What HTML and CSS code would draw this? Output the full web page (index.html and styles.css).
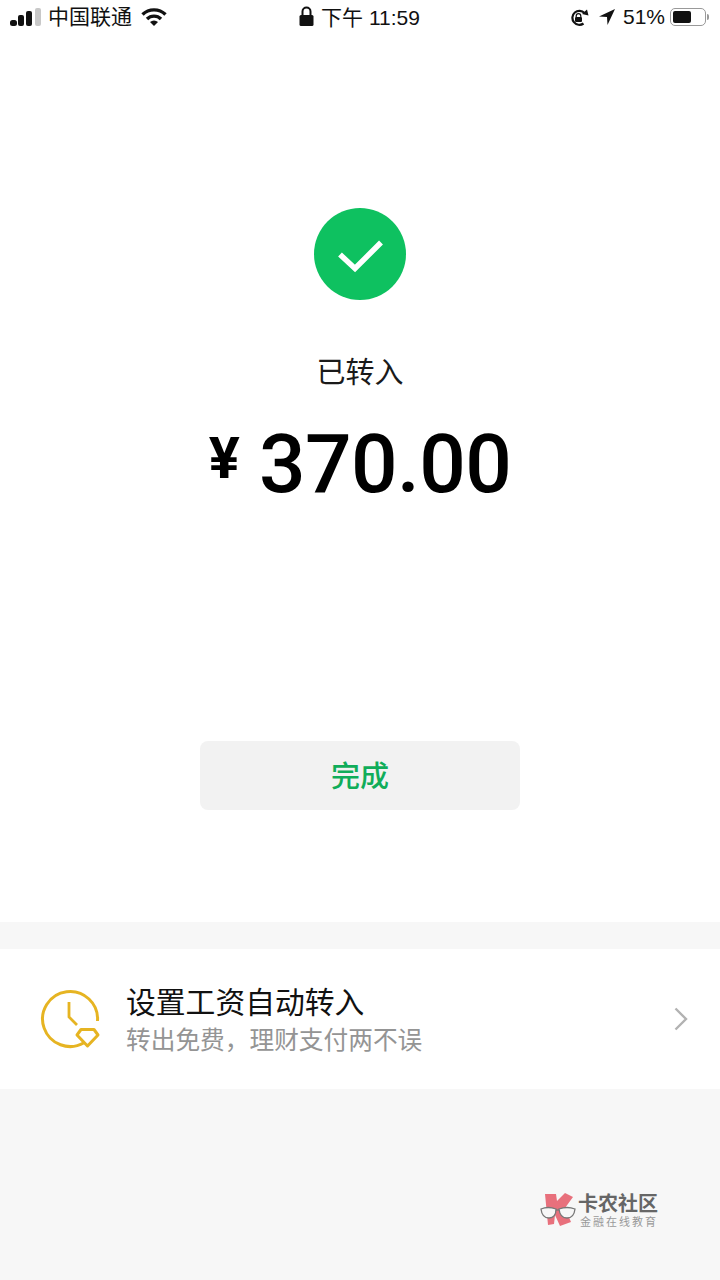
FILE: index.html
```html
<!DOCTYPE html>
<html lang="zh-CN">
<head>
  <meta charset="UTF-8">
  <title>已转入</title>
  <meta name="viewport" content="width=device-width, initial-scale=1.0">
  <link rel="stylesheet" href="styles.css">
</head>
<body>
  <div class="page">
    <div class="status-bar">
      <div class="status-left">
        <svg class="signal" width="31" height="18" viewBox="0 0 31 18">
          <rect x="0" y="12" width="7" height="6" rx="2.5" fill="#111"/>
          <rect x="8" y="7" width="6" height="11" rx="2" fill="#111"/>
          <rect x="16" y="3" width="6" height="15" rx="2" fill="#111"/>
          <rect x="25" y="0" width="6" height="18" rx="2" fill="#c8c8c8"/>
        </svg>
        <span class="carrier">中国联通</span>
        <svg class="wifi" width="26" height="18" viewBox="0 0 26 18">
          <path d="M1.5 6.5 A16.5 16.5 0 0 1 24.5 6.5" fill="none" stroke="#111" stroke-width="3.4"/>
          <path d="M6 11 A10 10 0 0 1 20 11" fill="none" stroke="#111" stroke-width="3.4"/>
          <path d="M13 18 L9 14 A6 6 0 0 1 17 14 Z" fill="#111"/>
        </svg>
      </div>
      <div class="status-center">
        <svg width="15" height="20" viewBox="0 0 15 20">
          <path d="M3.5 9 V5.5 A4 4 0 0 1 11.5 5.5 V9" fill="none" stroke="#111" stroke-width="2"/>
          <rect x="0.5" y="9" width="14" height="11" rx="1.5" fill="#111"/>
        </svg>
        <span class="clock">下午 11:59</span>
      </div>
      <div class="status-right">
        <svg width="19" height="17" viewBox="0 0 19 17">
          <path d="M13.5 14.5 A7 7 0 1 1 14.5 4" fill="none" stroke="#111" stroke-width="2.2"/>
          <path d="M12 5 L18.5 6.5 L17 0.5 Z" fill="#111"/>
          <path d="M6.2 8 V7 A2.3 2.3 0 0 1 10.8 7 V8" fill="none" stroke="#111" stroke-width="1.2"/>
          <rect x="5" y="8" width="7" height="5" rx="1" fill="#111"/>
        </svg>
        <svg class="arrow" width="16" height="16" viewBox="0 0 16 16">
          <path d="M16 0 L0 7.5 L8 8 L8.5 16 Z" fill="#111"/>
        </svg>
        <span class="percent">51%</span>
        <div class="battery"><div class="battery-fill"></div></div>
        <div class="battery-tip"></div>
      </div>
    </div>

    <div class="result">
      <svg class="check" width="92" height="92" viewBox="0 0 92 92">
        <circle cx="46" cy="46" r="46" fill="#0ec160"/>
        <path d="M26 46.5 L41 60.5 L67 34.5" fill="none" stroke="#fff" stroke-width="5.5"/>
      </svg>
      <div class="result-label">已转入</div>
      <div class="amount"><span class="yen">¥</span><span class="digits">370.00</span></div>
      <button class="done-btn"><span class="done-label">完成</span></button>
    </div>

    <div class="band"></div>

    <div class="promo">
      <svg class="promo-icon" width="62" height="62" viewBox="0 0 62 62">
        <path d="M44 54.7 A27.5 27.5 0 1 1 57.5 33" fill="none" stroke="#e6b422" stroke-width="3"/>
        <path d="M29 14 V29 L37 37" fill="none" stroke="#e6b422" stroke-width="2.8"/>
        <path d="M41 41.5 H54 L58 47 L47.5 58 L37 47 Z" fill="none" stroke="#e6b422" stroke-width="3" stroke-linejoin="round"/>
      </svg>
      <div class="promo-text">
        <div class="promo-title">设置工资自动转入</div>
        <div class="promo-sub">转出免费，理财支付两不误</div>
      </div>
      <svg class="chevron" width="14" height="24" viewBox="0 0 14 24">
        <path d="M1.5 1.5 L12 12 L1.5 22.5" fill="none" stroke="#b2b2b2" stroke-width="2.4"/>
      </svg>
    </div>

    <div class="rest"></div>

    <!-- 水印 -->
    <div class="watermark">
      <svg width="38" height="38" viewBox="0 0 38 38">
        <path d="M5 3 L16 3 L17 10 L25 2 L33 6 L25 17 L31 31 L20 35 L15 24 L14 33 L8 34 Z" fill="#e8707c"/>
        <path d="M1 18 Q8 15 16 18 Q16 27 9 27 Q2 27 1 18 Z" fill="#f7f7f7" stroke="#777" stroke-width="1.3"/>
        <path d="M19 18 Q27 15 35 18 Q34 27 27 27 Q20 27 19 18 Z" fill="#f7f7f7" stroke="#777" stroke-width="1.3"/>
        <path d="M16 19 H19" fill="none" stroke="#777" stroke-width="1.3"/>
      </svg>
      <div class="watermark-text">
        <div class="wm-title">卡农社区</div>
        <div class="wm-sub">金融在线教育</div>
      </div>
    </div>
  </div>
</body>
</html>
```

FILE: styles.css
```css
* {
  box-sizing: border-box;
}
body {
  margin: 0;
  background: #fff;
  font-family: "Noto Sans CJK SC", "Liberation Sans", sans-serif;
  color: #111;
}
.page {
  position: relative;
  width: 720px;
  height: 1280px;
  display: flex;
  flex-direction: column;
  overflow: hidden;
}

/* status bar */
.status-bar {
  height: 34px;
  padding: 0 11px 0 10px;
  display: flex;
  align-items: center;
  justify-content: space-between;
  font-size: 21px;
}
.status-left, .status-center, .status-right {
  display: flex;
  align-items: center;
}
.status-left {
  width: 240px;
}
.carrier {
  margin-left: 7px;
  margin-right: 9px;
  padding-bottom: 4px;
}
.status-center {
  gap: 7px;
  padding-bottom: 3px;
  font-family: "Liberation Sans", "Noto Sans CJK SC", sans-serif;
}
.status-right {
  width: 240px;
  justify-content: flex-end;
  font-family: "Liberation Sans", sans-serif;
}
.arrow {
  margin-left: 10px;
}
.percent {
  margin-left: 8px;
  margin-right: 5px;
}
.battery {
  width: 36px;
  height: 18px;
  border: 1.5px solid #999;
  border-radius: 5px;
  padding: 2px;
}
.battery-fill {
  width: 18px;
  height: 100%;
  background: #111;
  border-radius: 2px;
}
.battery-tip {
  width: 2px;
  height: 6px;
  margin-left: 1px;
  background: #999;
  border-radius: 0 2px 2px 0;
}

/* result */
.result {
  height: 888px;
  padding-top: 174px;
  display: flex;
  flex-direction: column;
  align-items: center;
}
.check {
  display: block;
}
.result-label {
  margin-top: 47px;
  font-size: 29px;
  line-height: 46px;
  color: #1a1a1a;
}
.amount {
  margin-top: 21px;
  height: 100px;
  display: flex;
  align-items: center;
  font-family: "Roboto", "Liberation Sans", sans-serif;
  font-weight: 500;
  color: #000;
}
.yen {
  font-size: 58px;
  font-weight: 700;
  margin-right: 19px;
  margin-top: -13px;
}
.digits {
  font-size: 82px;
  letter-spacing: -0.6px;
}
.done-btn {
  margin-top: 227px;
  width: 320px;
  height: 69px;
  padding: 0 0 3px;
  border: none;
  border-radius: 8px;
  background: #f2f2f2;
  color: #10ad5a;
  font-family: "Noto Sans CJK SC", sans-serif;
  font-size: 29px;
  font-weight: 500;
}

/* promo row */
.band {
  height: 27px;
  background: #f7f7f7;
}
.promo {
  height: 140px;
  padding: 0 32px 0 40px;
  display: flex;
  align-items: center;
  background: #fff;
}
.promo-icon {
  flex-shrink: 0;
}
.promo-text {
  flex: 1;
  margin-left: 24px;
  padding-bottom: 3px;
}
.promo-title {
  font-size: 29.8px;
  line-height: 40px;
  color: #111;
}
.promo-sub {
  font-size: 24.7px;
  line-height: 36px;
  color: #949494;
}
.rest {
  flex: 1;
  background: #f7f7f7;
}

/* watermark */
.watermark {
  position: absolute;
  left: 540px;
  top: 1191px;
  display: flex;
  align-items: center;
}
.wm-title {
  font-size: 20px;
  line-height: 22px;
  font-weight: 700;
  color: #666;
}
.wm-sub {
  margin-left: 2px;
  font-size: 11px;
  line-height: 14px;
  letter-spacing: 2px;
  color: #999;
}
```
